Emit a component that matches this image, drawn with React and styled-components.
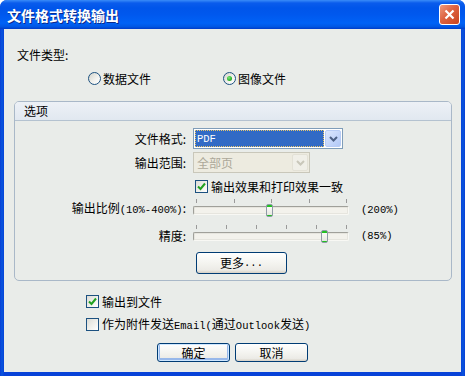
import React from 'react';
import styled, { createGlobalStyle } from 'styled-components';

const Global = createGlobalStyle`
  html, body { margin: 0; padding: 0; background: #fff; }
  body {
    font-family: "Noto Sans CJK SC", "Noto Sans", sans-serif;
    font-size: 12px;
    line-height: 14px;
    color: #000;
    text-autospace: no-autospace;
  }
`;

const Window = styled.div`
  width: 465px;
  height: 376px;
  display: flex;
  flex-direction: column;
  background: linear-gradient(90deg, #0A3ED6 0, #0855DD 2px, #0842D8 4px, #0842D8 461px, #0855DD 463px, #0A3ED6 100%);
  border-radius: 7px 7px 0 0;
  overflow: hidden;
`;

const TitleBar = styled.div`
  height: 29px;
  flex: none;
  display: flex;
  align-items: center;
  justify-content: space-between;
  padding-left: 7px;
  background: linear-gradient(180deg, #3A8CF8 0, #0A5CEC 3px, #0055EA 8px, #0058EE 50%, #0062F6 80%, #0057E4 92%, #003CC8 100%);
`;

const Title = styled.div`
  color: #fff;
  font-size: 14px;
  font-weight: bold;
  line-height: 16px;
  text-shadow: 1px 1px 0 #0B2A8C;
`;

const CloseButton = styled.div`
  width: 21px;
  height: 21px;
  box-sizing: border-box;
  margin-right: 5px;
  border: 1px solid #fff;
  border-radius: 3px;
  background: linear-gradient(135deg, #EE9A7C 0, #DD6240 45%, #C9431F 100%);
  display: flex;
  align-items: center;
  justify-content: center;
`;

const Client = styled.div`
  flex: 1;
  margin: 0 4px 4px 4px;
  background: #E9ECE9;
  display: flex;
  flex-direction: column;
  padding-top: 19px;
`;

const Lat = styled.span`
  display: inline-block;
  font-family: "Liberation Mono", monospace;
  font-size: 10.5px;
  text-autospace: no-autospace;
`;

const Text = styled.div`
  margin-left: ${p => p.$left || 0}px;
  white-space: nowrap;
`;

const RadioRow = styled.div`
  display: flex;
  margin-top: 10px;
  padding-left: 84px;
  gap: 72px;
`;

const Choice = styled.div`
  display: flex;
  align-items: center;
  gap: ${p => p.$gap || 2}px;
  height: 13px;
  white-space: nowrap;
  margin-left: ${p => p.$left || 0}px;
  margin-top: ${p => p.$top || 0}px;
`;

const ChoiceText = styled.span`
  white-space: nowrap;
`;

const RadioDot = styled.span`
  width: 13px;
  height: 13px;
  box-sizing: border-box;
  border-radius: 50%;
  border: 1px solid #1C5180;
  background: linear-gradient(135deg, #D4D4CC 0, #F4F4F0 60%, #FFFFFF 100%);
  display: flex;
  align-items: center;
  justify-content: center;
  &::after {
    content: "";
    display: ${p => (p.$on ? 'block' : 'none')};
    width: 5px;
    height: 5px;
    border-radius: 50%;
    background: radial-gradient(circle at 40% 35%, #7BE87A 0, #2DB42A 60%, #1E8E1C 100%);
  }
`;

const CheckBox = styled.span`
  width: 13px;
  height: 13px;
  box-sizing: border-box;
  border: 1px solid #1C5180;
  background: linear-gradient(135deg, #DCDCD6 0, #F2F2EE 60%, #FFFFFF 100%);
  display: flex;
  align-items: center;
  justify-content: center;
`;

const Group = styled.div`
  margin: 16px 9px 0 10px;
  border: 1px solid #A9B8C8;
  border-radius: 5px;
  padding-bottom: 6px;
  display: flex;
  flex-direction: column;
`;

const GroupHeader = styled.div`
  height: 18px;
  padding-left: 9px;
  display: flex;
  align-items: center;
  border-bottom: 1px solid #B4C2D0;
  border-radius: 4px 4px 0 0;
  background: linear-gradient(180deg, #EDF1F6 0, #E1E8F0 100%);
`;

const FieldRow = styled.div`
  display: flex;
  align-items: ${p => p.$align || 'center'};
  margin-top: ${p => p.$top}px;
`;

const Label = styled.div`
  width: 171px;
  flex: none;
  text-align: right;
  white-space: nowrap;
  margin-right: 7px;
`;

const Combo = styled.div`
  width: ${p => p.$width}px;
  height: 21px;
  box-sizing: border-box;
  border: 1px solid ${p => (p.$disabled ? '#C9C7BA' : '#7F9DB9')};
  background: ${p => (p.$disabled ? '#EDEBE0' : '#fff')};
  display: flex;
  padding: 1px;
  gap: 1px;
`;

const ComboValue = styled.div`
  flex: 1;
  display: flex;
  align-items: center;
  padding-left: 2px;
  color: ${p => (p.$disabled ? '#ACA899' : '#fff')};
  background: ${p => (p.$disabled ? 'transparent' : '#316AC5')};
  outline: ${p => (p.$disabled ? 'none' : '1px dotted #E8C66A')};
  outline-offset: -1px;
`;

const ComboArrow = styled.div`
  width: 16px;
  flex: none;
  box-sizing: border-box;
  border: 1px solid ${p => (p.$disabled ? '#E3E1D6' : '#B8CCF5')};
  border-radius: 2px;
  background: ${p => (p.$disabled ? '#F0EFE8' : 'linear-gradient(135deg, #DCE7FD 0, #C3D5FA 60%, #B2C8F6 100%)')};
  display: flex;
  align-items: center;
  justify-content: center;
`;

const SliderBox = styled.div`
  position: relative;
  width: 156px;
  height: 18px;
  flex: none;
`;

const Tick = styled.span`
  position: absolute;
  top: 0;
  width: 1px;
  height: 4px;
  background: #9A9A9A;
`;

const Track = styled.div`
  position: absolute;
  left: 0;
  right: 0;
  top: 7px;
  height: 9px;
  box-sizing: border-box;
  border: 1px solid;
  border-color: #A0A09A #F8F8F4 #F8F8F4 #A0A09A;
  border-radius: 2px;
  background: #F3F2EC;
  box-shadow: inset 0 0 0 1px #E6E5DE;
`;

const Thumb = styled.span`
  position: absolute;
  top: 5px;
  width: 7px;
  height: 13px;
  box-sizing: border-box;
  border: 1px solid #8E9AA6;
  border-radius: 2px;
  background: linear-gradient(180deg, #21C121 0, #21C121 2px, #FBFBF8 2px, #E6E6E0 10px, #21C121 10px, #21C121 100%);
`;

const SliderValue = styled.div`
  margin-left: 12px;
`;

const PushButton = styled.div`
  width: ${p => p.$width}px;
  height: ${p => p.$height}px;
  box-sizing: border-box;
  border: 1px solid #003C74;
  border-radius: 3px;
  background: linear-gradient(180deg, #FFFFFF 0, #F4F4F0 50%, #ECEBE6 85%, #D6D0C5 100%);
  box-shadow: ${p => (p.$default ? 'inset 0 0 0 1px #CEE7FF, inset 0 -1px 0 2px #98B8EA' : 'none')};
  display: flex;
  align-items: center;
  justify-content: center;
  white-space: nowrap;
  flex: none;
  margin-left: ${p => p.$left || 0}px;
`;

const ButtonBar = styled.div`
  display: flex;
  justify-content: center;
  gap: 5px;
  margin-top: 12px;
`;

const Chevron = ({ color }) => (
  <svg width="9" height="6" viewBox="0 0 9 6">
    <polyline points="1,1 4.5,4.5 8,1" fill="none" stroke={color} strokeWidth="2" />
  </svg>
);

const Check = () => (
  <svg width="9" height="9" viewBox="0 0 9 9">
    <polyline points="1,4.5 3.5,7 8,1.5" fill="none" stroke="#21A121" strokeWidth="2" />
  </svg>
);

const Slider = ({ ticks, pos }) => (
  <SliderBox>
    {Array.from({ length: ticks }).map((_, i) => (
      <Tick key={i} style={{ left: 3 + (150 * i) / (ticks - 1) }} />
    ))}
    <Track />
    <Thumb style={{ left: 3 + 150 * pos - 3 }} />
  </SliderBox>
);

export default function App() {
  return (
    <>
      <Global />
      <Window>
        <TitleBar>
          <Title>文件格式转换输出</Title>
          <CloseButton>
            <svg width="11" height="11" viewBox="0 0 11 11">
              <path d="M1.5 1.5 L9.5 9.5 M9.5 1.5 L1.5 9.5" stroke="#fff" strokeWidth="2.2" />
            </svg>
          </CloseButton>
        </TitleBar>
        <Client>
          <Text $left={13}>文件类型:</Text>
          <RadioRow>
            <Choice><RadioDot />数据文件</Choice>
            <Choice><RadioDot $on />图像文件</Choice>
          </RadioRow>

          <Group>
            <GroupHeader>选项</GroupHeader>
            <FieldRow $top={7}>
              <Label>文件格式:</Label>
              <Combo $width={150}>
                <ComboValue><Lat>PDF</Lat></ComboValue>
                <ComboArrow><Chevron color="#4D6185" /></ComboArrow>
              </Combo>
            </FieldRow>
            <FieldRow $top={3}>
              <Label>输出范围:</Label>
              <Combo $width={117} $disabled>
                <ComboValue $disabled>全部页</ComboValue>
                <ComboArrow $disabled><Chevron color="#C9C7BA" /></ComboArrow>
              </Combo>
            </FieldRow>
            <FieldRow $top={7}>
              <Label />
              <Choice $gap={3} $left={2}>
                <CheckBox><Check /></CheckBox>
                输出效果和打印效果一致
              </Choice>
            </FieldRow>
            <FieldRow $top={6} $align="flex-end">
              <Label>输出比例<Lat>(10%-400%)</Lat>:</Label>
              <Slider ticks={5} pos={190 / 390} />
              <SliderValue><Lat>(200%)</Lat></SliderValue>
            </FieldRow>
            <FieldRow $top={8} $align="flex-end">
              <Label>精度:</Label>
              <Slider ticks={6} pos={0.85} />
              <SliderValue><Lat>(85%)</Lat></SliderValue>
            </FieldRow>
            <FieldRow $top={9}>
              <Label />
              <PushButton $width={91} $height={22} $left={3}>更多<Lat>...</Lat></PushButton>
            </FieldRow>
          </Group>

          <Choice $gap={3} $left={82} $top={14}>
            <CheckBox><Check /></CheckBox>
            输出到文件
          </Choice>
          <Choice $gap={3} $left={82} $top={10}>
            <CheckBox />
            <ChoiceText>作为附件发送<Lat>Email(</Lat>通过<Lat>Outlook</Lat>发送<Lat>)</Lat></ChoiceText>
          </Choice>

          <ButtonBar>
            <PushButton $width={73} $height={19} $default>确定</PushButton>
            <PushButton $width={73} $height={19}>取消</PushButton>
          </ButtonBar>
        </Client>
      </Window>
    </>
  );
}
